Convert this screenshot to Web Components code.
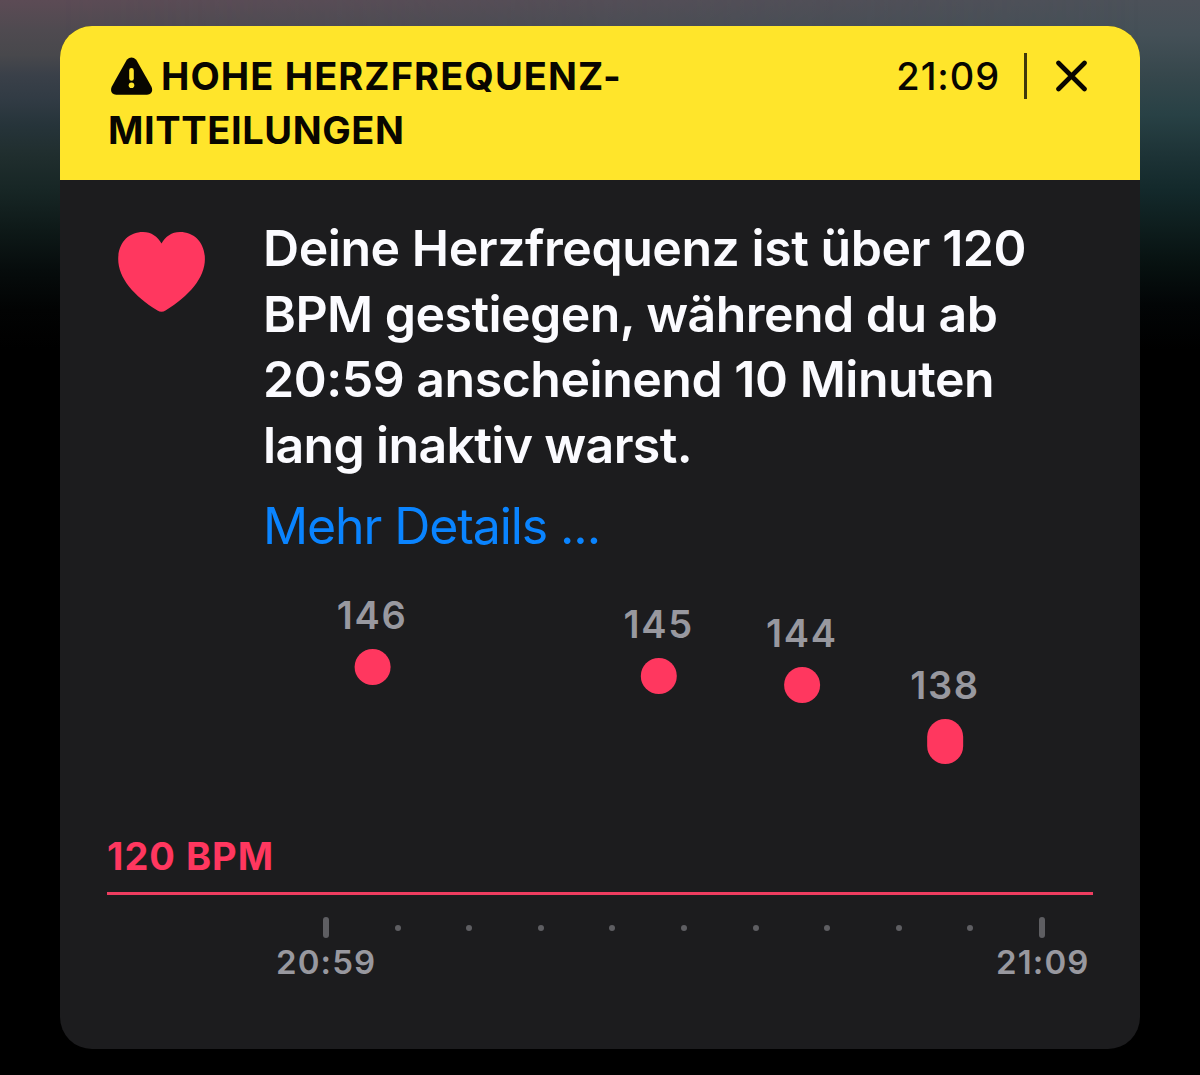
<!DOCTYPE html>
<html lang="de">
<head>
<meta charset="utf-8">
<title>Hohe Herzfrequenz</title>
<style>
  html, body { margin: 0; height: 100%; background: #000; }
  body { font-family: Inter, 'Liberation Sans', sans-serif; }
</style>
</head>
<body>
<health-screen>
  <alert-card>
    <alert-header slot="header" time="21:09">
      <text-line style="--track: 1.1px">HOHE HERZFREQUENZ-</text-line>
      <text-line slot="second" style="--track: 0.6px">MITTEILUNGEN</text-line>
    </alert-header>
    <alert-message>
      <text-line style="--track: -0.45px">Deine Herzfrequenz ist über 120</text-line>
      <text-line style="--track: -0.55px">BPM gestiegen, während du ab</text-line>
      <text-line style="--track: -0.47px">20:59 anscheinend 10 Minuten</text-line>
      <text-line style="--track: -0.65px">lang inaktiv warst.</text-line>
      <text-line slot="link" style="--track: -1.1px">Mehr Details ...</text-line>
    </alert-message>
    <heart-chart threshold="120" start="20:59" end="21:09" minutes="10">
      <heart-point minute="0.645" high="146"></heart-point>
      <heart-point minute="4.645" high="145"></heart-point>
      <heart-point minute="6.645" high="144"></heart-point>
      <heart-point minute="8.645" high="138" low="137"></heart-point>
    </heart-chart>
  </alert-card>
</health-screen>

<script>
/** <health-screen> — dunkler Hintergrund mit Farbverlauf am oberen Rand */
class HealthScreen extends HTMLElement {
  constructor() {
    super()
    this.attachShadow({ mode: 'open' }).innerHTML = `
      <style>
        :host {
          display: grid;
          box-sizing: border-box;
          width: 1200px;
          height: 1075px;
          padding: 26px 60px;
          overflow: hidden;
          background: linear-gradient(180deg, #4c5159 0, #445057 35px, #36474c 75px, #284145 115px,
            #1d3336 155px, #13292b 190px, #0e1e1e 225px, #071110 265px, #020506 305px, #000 350px);
        }
        /* warmer Schimmer, der nach rechts ausläuft */
        .glow {
          grid-area: 1 / 1;
          margin: -26px -60px;
          background: linear-gradient(180deg, #5c4b55 0, #4f4a50 30px, #48484c 55px, #3a4049 75px,
            #313b44 100px, #26343a 125px, #202e2e 155px, #172625 190px, #0e1918 230px, #060c0c 270px,
            #020303 310px, #000 350px);
          -webkit-mask-image: linear-gradient(90deg, #000 5%, transparent 95%);
          mask-image: linear-gradient(90deg, #000 5%, transparent 95%);
        }
        .content { grid-area: 1 / 1; z-index: 1; min-width: 0; }
      </style>
      <div class="glow"></div>
      <div class="content"><slot></slot></div>
    `
  }
}

/** <text-line> — eine Textzeile; --track steuert die Laufweite */
class TextLine extends HTMLElement {
  constructor() {
    super()
    this.attachShadow({ mode: 'open' }).innerHTML = `
      <style>
        :host { display: block; white-space: nowrap; letter-spacing: var(--track, 0); }
      </style>
      <slot></slot>
    `
  }
}

/** <alert-card> — abgerundete Karte mit Kopf und Inhalt */
class AlertCard extends HTMLElement {
  constructor() {
    super()
    this.attachShadow({ mode: 'open' }).innerHTML = `
      <style>
        :host {
          display: flex;
          flex-direction: column;
          height: 1023px;
          border-radius: 32px;
          overflow: hidden;
          background: #1c1c1e;
        }
      </style>
      <slot name="header"></slot>
      <slot></slot>
    `
  }
}

/**
 * <alert-header> — gelber Kopf mit Warnsymbol, Uhrzeit und Schließen-Knopf
 *
 * Attribute:
 *   time — angezeigte Uhrzeit
 */
class AlertHeader extends HTMLElement {
  constructor() {
    super()
    this.attachShadow({ mode: 'open' })
  }

  connectedCallback() {
    this.shadowRoot.innerHTML = `
      <style>
        :host {
          display: flex;
          justify-content: space-between;
          align-items: flex-start;
          box-sizing: border-box;
          height: 154px;
          padding: 23px 52px 0 48px;
          background: #ffe52b;
          color: #080600;
          font-size: 38px;
          line-height: 54px;
          font-weight: 700;
        }
        .first { display: flex; align-items: center; gap: 8px; padding-left: 2px; }
        .side { display: flex; align-items: center; height: 54px; font-weight: 500; }
        .time { letter-spacing: 0.9px; }
        .rule { width: 3px; height: 46px; margin: 0 28px 0 24px; background: #40390b; }
        button { display: flex; padding: 0; border: 0; background: none; color: inherit; }
        svg { display: block; }
      </style>
      <div>
        <div class="first">
          <svg width="43" height="40" viewBox="0 0 43 40">
            <path d="M16.800 3.800Q21.500 -.8 26.200 3.800L41.500 30.800Q44 37.800 37 38.800H6.200Q-.8 37.800 1.700 30.800Z" fill="currentColor"/>
            <path d="M21.500 14.400V22.400" stroke="#ffe52b" stroke-width="4.600" stroke-linecap="round"/>
            <circle cx="21.500" cy="29.300" r="2.800" fill="#ffe52b"/>
          </svg>
          <slot></slot>
        </div>
        <slot name="second"></slot>
      </div>
      <div class="side">
        <span class="time">${this.getAttribute('time') || ''}</span>
        <span class="rule"></span>
        <button aria-label="Schließen">
          <svg width="33" height="33" viewBox="0 0 33 33">
            <path d="M3.500 3L29.500 29M29.500 3L3.500 29" stroke="currentColor" stroke-width="4.600" stroke-linecap="round"/>
          </svg>
        </button>
      </div>
    `
  }
}

/** <alert-message> — Herz, Mitteilung und Link */
class AlertMessage extends HTMLElement {
  constructor() {
    super()
    this.attachShadow({ mode: 'open' }).innerHTML = `
      <style>
        :host {
          display: flex;
          align-items: flex-start;
          gap: 57px;
          height: 386px;
          padding: 0 48px 0 58px;
          color: #fbfbff;
          font-size: 50px;
          font-weight: 600;
        }
        svg { display: block; flex: none; margin-top: 52px; }
        .text { padding-top: 36px; line-height: 65.7px; }
        a { display: block; margin-top: 15px; color: #0a84ff; font-weight: 400; }
      </style>
      <svg width="88" height="81" viewBox="0 0 88 81">
        <path d="M43.500 11.500C39.500 4.500 33.500 0 25 0C10.500 0 .2 11 .2 27C.2 46 16 64 39.500 78.500Q43.500 81 47.500 78.500C71 64 86.900 46 86.900 27C86.900 11 76.500 0 62 0C53.500 0 47.500 4.500 43.500 11.500Z" fill="#ff375f"/>
      </svg>
      <div class="text">
        <slot></slot>
        <a><slot name="link"></slot></a>
      </div>
    `
  }
}

// Maßstab des Diagramms
const MINUTE_WIDTH = 71.6
const BPM_HEIGHT = 8.7
const AXIS_START = 219

/**
 * <heart-point> — Messpunkt mit Wert darüber
 *
 * Attribute:
 *   minute — Abstand vom Start der Achse
 *   high   — höchster Wert
 *   low    — niedrigster Wert (optional)
 */
class HeartPoint extends HTMLElement {
  constructor() {
    super()
    this.attachShadow({ mode: 'open' })
  }

  connectedCallback() {
    const high = Number(this.getAttribute('high'))
    const low  = Number(this.getAttribute('low') || high)
    const base = Number(this.parentElement.getAttribute('threshold'))

    const left   = AXIS_START + Number(this.getAttribute('minute')) * MINUTE_WIDTH
    const bottom = (low - base) * BPM_HEIGHT - 19.5
    const height = 36 + (high - low) * BPM_HEIGHT

    this.shadowRoot.innerHTML = `
      <style>
        :host {
          position: absolute;
          left: ${left}px;
          bottom: ${bottom}px;
          display: flex;
          flex-direction: column;
          align-items: center;
          gap: 10px;
          transform: translateX(-50%);
          color: #98989f;
          font-size: 38px;
          line-height: 48px;
          font-weight: 600;
          letter-spacing: 1.7px;
        }
        .dot { width: 36px; height: ${height}px; border-radius: 18px; background: #ff375f; }
      </style>
      <span>${high}</span>
      <span class="dot"></span>
    `
  }
}

/**
 * <heart-chart> — Verlauf der Herzfrequenz über dem Grenzwert
 *
 * Attribute:
 *   threshold  — Grenzwert in BPM
 *   start, end — Beschriftung der Zeitachse
 *   minutes    — Anzahl der Minuten auf der Achse
 */
class HeartChart extends HTMLElement {
  constructor() {
    super()
    this.attachShadow({ mode: 'open' })
  }

  _ticks(count) {
    let html = ''
    for (let i = 0; i <= count; i++) {
      html += `<i class="${i === 0 || i === count ? 'major' : ''}"></i>`
    }
    return html
  }

  connectedCallback() {
    this.shadowRoot.innerHTML = `
      <style>
        :host { display: block; padding: 0 47.5px 0 47px; }
        .plot {
          position: relative;
          display: flex;
          align-items: flex-end;
          height: 326px;
        }
        .limit {
          padding-bottom: 12px;
          color: #ff375f;
          font-size: 38px;
          line-height: 48px;
          font-weight: 700;
          letter-spacing: 1px;
        }
        .line { height: 3px; background: #ee3d60; }
        .ticks {
          display: flex;
          justify-content: space-between;
          align-items: center;
          height: 21px;
          padding: 22px 47.5px 0 216px;
        }
        i { width: 6px; height: 6px; border-radius: 3px; background: #5e5e62; }
        i.major { height: 21px; }
        .times {
          display: flex;
          justify-content: space-between;
          padding: 4px 3px 0 169px;
          color: #98989f;
          font-size: 33px;
          line-height: 40px;
          font-weight: 600;
          letter-spacing: 1.1px;
        }
      </style>
      <div class="plot">
        <span class="limit">${this.getAttribute('threshold')} BPM</span>
        <slot></slot>
      </div>
      <div class="line"></div>
      <div class="ticks">${this._ticks(Number(this.getAttribute('minutes')))}</div>
      <div class="times">
        <span>${this.getAttribute('start')}</span>
        <span>${this.getAttribute('end')}</span>
      </div>
    `
  }
}

customElements.define('health-screen', HealthScreen)
customElements.define('text-line', TextLine)
customElements.define('alert-card', AlertCard)
customElements.define('alert-header', AlertHeader)
customElements.define('alert-message', AlertMessage)
customElements.define('heart-chart', HeartChart)
customElements.define('heart-point', HeartPoint)
</script>
</body>
</html>
